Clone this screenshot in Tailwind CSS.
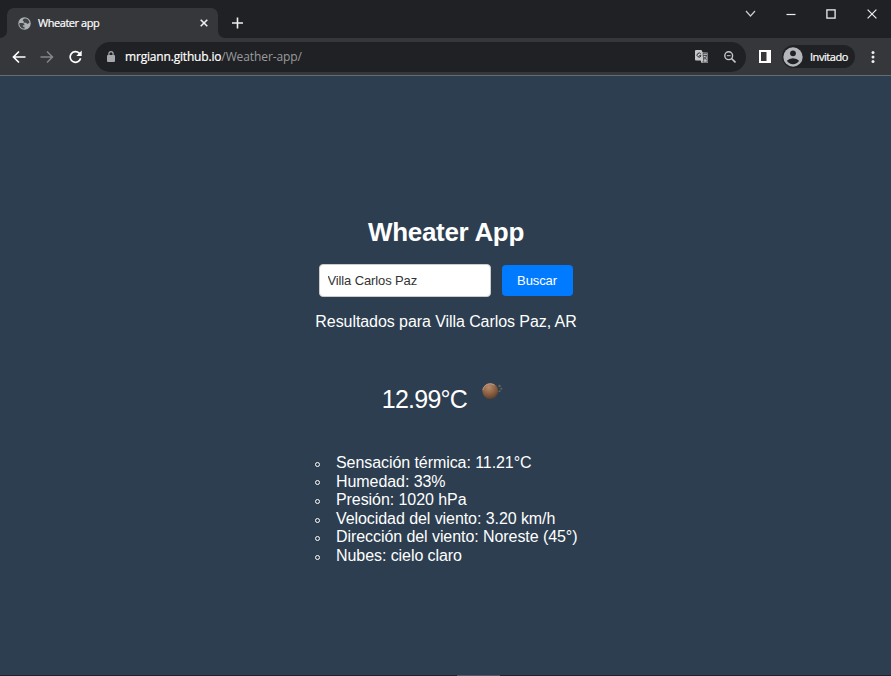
<!DOCTYPE html>
<html lang="es">
<head>
<meta charset="utf-8">
<title>Wheater app</title>
<script src="https://cdn.jsdelivr.net/npm/@tailwindcss/browser@4"></script>
</head>
<body class="w-[891px] h-[676px] overflow-hidden flex flex-col bg-[#2c3e50] text-white font-['Liberation_Sans',Arial,sans-serif]">
<header class="shrink-0 h-[76px] flex flex-col border-b border-[#626c75] bg-[#36373b] font-['Open_Sans','Noto_Sans',sans-serif]">
  <div class="h-[38px] shrink-0 flex bg-[#202124]">
    <div class="w-[225px] shrink-0 pt-2 flex items-end">
      <svg class="w-[7px] h-[7px] shrink-0" viewBox="0 0 7 7"><path d="M7 0v7H0a7 7 0 0 0 7-7z" fill="#36373b"/></svg>
      <div class="w-[211px] h-[30px] shrink-0 rounded-t-[7px] bg-[#36373b] flex items-center pl-[11px] pr-[10px]">
        <svg class="w-[13px] h-[13px] shrink-0" viewBox="0 0 24 24"><circle cx="12" cy="12" r="11.5" fill="#adb0b4"/><path d="M2.500 11h5c3 0 4.500 1.500 4.500 4h-3v3h3v3.500C6 21.500 2 17 2.500 11zM11 3c5-1 9.500 2 10.300 7.500L17 13l-2-2.500h-4.500V7.500H9V5z" fill="#404347"/></svg>
        <span class="ml-[7px] text-[11px] leading-4 font-medium tracking-[-0.45px] [-webkit-text-stroke:0.2px_white] whitespace-nowrap">Wheater app</span>
        <svg class="ml-auto w-2 h-2" viewBox="0 0 8 8"><path d="M.7.7l6.600 6.600M7.300.7L.7 7.300" stroke="#eee" stroke-width="1.600"/></svg>
      </div>
      <svg class="w-[7px] h-[7px] shrink-0" viewBox="0 0 7 7"><path d="M0 0v7h7a7 7 0 0 1-7-7z" fill="#36373b"/></svg>
    </div>
    <div class="pt-[17px] pl-[7px]"><svg class="w-[11px] h-[12px]" viewBox="0 0 11 12"><path d="M5.500.5v11M0 6h11" stroke="#eee" stroke-width="1.600"/></svg></div>
    <div class="ml-auto h-[27px] pr-[14px] flex items-center">
      <svg class="w-[11px] h-[11px] mr-[30px]" viewBox="0 0 11 11"><path d="M1 3l4.500 5L10 3" fill="none" stroke="#ccc" stroke-width="1.200"/></svg>
      <svg class="w-[10px] h-[10px] mr-[30px]" viewBox="0 0 10 10"><path d="M0.500 5.500h9" stroke="#eee" stroke-width="1.200"/></svg>
      <svg class="w-[10px] h-[10px] mr-[31px]" viewBox="0 0 10 10"><rect x=".9" y=".9" width="8.200" height="8.200" fill="none" stroke="#eee" stroke-width="1.300"/></svg>
      <svg class="w-[10px] h-[10px]" viewBox="0 0 10 10"><path d="M.6.6l8.800 8.800M9.400.6L.6 9.400" stroke="#eee" stroke-width="1.200"/></svg>
    </div>
  </div>
  <div class="h-[37px] flex items-center pl-[12px] pr-[16px]">
    <svg class="w-[14px] h-[14px] mr-[14px]" viewBox="0 0 14 14"><path d="M13.500 7H2M7 1.500L1.500 7 7 12.500" fill="none" stroke="#fff" stroke-width="1.700"/></svg>
    <svg class="w-[14px] h-[14px] mr-[14px]" viewBox="0 0 14 14"><path d="M.5 7H12M7 1.500L12.500 7 7 12.500" fill="none" stroke="#85878a" stroke-width="1.500"/></svg>
    <svg class="w-[15px] h-[14px] mr-[12px]" viewBox="0 0 15 14"><path d="M12.600 8.200a5.300 5.300 0 1 1-1.400-5L12.500 4.500" fill="none" stroke="#fff" stroke-width="1.700"/><path d="M13.700.5v5.400H8.300z" fill="#fff"/></svg>
    <div class="w-[651px] h-[30px] rounded-full bg-[#202124] flex items-center pl-[12px] pr-[10px]">
      <svg class="w-[8px] h-[11px]" viewBox="0 0 8 11"><rect y="4" width="8" height="7" rx="1" fill="#a5a8ac"/><path d="M1.900 4V2.700a2.100 2.100 0 0 1 4.200 0V4" fill="none" stroke="#a5a8ac" stroke-width="1.200"/></svg>
      <span class="ml-[10px] text-[12px] leading-4 text-[#999c9f] whitespace-nowrap"><span class="text-white font-medium tracking-[-0.18px] [-webkit-text-stroke:0.2px_white]">mrgiann.github.io</span><span class="tracking-[-0.1px]">/Weather-app/</span></span>
      <svg class="ml-auto w-[13px] h-[13px] mr-[16px]" viewBox="0 0 13 13"><path d="M1 0h5.500l1.200 2.500H12a1 1 0 0 1 1 1V12a1 1 0 0 1-1 1H6.500l-.8-2.500H1a1 1 0 0 1-1-1V1a1 1 0 0 1 1-1z" fill="#c5c7c9"/><path d="M5.800 4A2 2 0 1 0 6 5.700H4.200" fill="none" stroke="#292b2e" stroke-width="1"/><path d="M8 3.300h4.200v8.900H7.700l1-1.700zM8.300 5.500h3.700M10 4.500v1M11.300 5.500c-.3 2-1.300 3.200-2.600 4.200M9 7l2.600 3" fill="none" stroke="#292b2e" stroke-width=".7"/></svg>
      <svg class="w-[12px] h-[12px]" viewBox="0 0 12 12"><circle cx="4.700" cy="4.700" r="3.900" fill="none" stroke="#c5c7c9" stroke-width="1.400"/><path d="M2.800 4.700h3.800" stroke="#c5c7c9" stroke-width="1"/><path d="M7.500 7.500l4 4" stroke="#c5c7c9" stroke-width="1.600"/></svg>
    </div>
    <svg class="ml-[13px] w-[12px] h-[13px]" viewBox="0 0 12 13"><path fill="#fff" fill-rule="evenodd" d="M0 0h12v13H0zM2 2v9h5.500V2z"/></svg>
    <div class="ml-[11px] w-[73px] h-[23px] shrink-0 rounded-full bg-[#202124] flex items-center pl-[1px]">
      <svg class="w-[20px] h-[20px] shrink-0" viewBox="0 0 20 20"><circle cx="10" cy="10" r="9.700" fill="#b3b6ba"/><circle cx="10" cy="6.300" r="2.900" fill="#202124"/><path d="M3.900 13.800Q6 11.300 10 11.300t6.100 2.500Q14 17.200 10 17.200T3.900 13.800z" fill="#202124"/></svg>
      <span class="ml-[7px] text-[11px] leading-4 font-medium tracking-[-0.45px] [-webkit-text-stroke:0.2px_white] whitespace-nowrap">Invitado</span>
    </div>
    <svg class="ml-auto w-[4px] h-[12px]" viewBox="0 0 4 12"><circle cx="2" cy="1.500" r="1.500" fill="#eee"/><circle cx="2" cy="6" r="1.500" fill="#eee"/><circle cx="2" cy="10.500" r="1.500" fill="#eee"/></svg>
  </div>
</header>
<main class="flex-1 min-h-0 flex flex-col items-center">
  <h1 class="mt-[141px] h-[30px] pl-px text-[26px] leading-[30px] tracking-[-0.3px] font-bold">Wheater App</h1>
  <form class="mt-[17px] h-[33px] flex items-center gap-[11px]">
    <input class="w-[172px] h-[33px] rounded-[4px] border border-[#ccc] bg-white px-2 text-[13px] tracking-[-0.12px] text-[#333]" value="Villa Carlos Paz" aria-label="Ciudad">
    <button type="button" class="w-[71px] h-[31px] rounded-[4px] bg-[#007bff] text-[13px] tracking-[-0.1px]">Buscar</button>
  </form>
  <p class="mt-[15px] pl-px text-[16px] leading-5 tracking-[-0.07px] whitespace-nowrap">Resultados para Villa Carlos Paz, AR</p>
  <div class="mt-[49px] h-[40px] flex items-start">
    <span class="mt-[3px] pl-px text-[25px] leading-[30px] tracking-[-0.75px] whitespace-nowrap">12.99°C</span>
    <svg class="ml-[11px] w-[32px] h-[20px]" viewBox="0 0 32 20"><defs><radialGradient id="sun" cx="40%" cy="25%" r="75%"><stop stop-color="#b98b6c"/><stop offset=".65" stop-color="#865a3d"/><stop offset="1" stop-color="#5b4030"/></radialGradient></defs><circle cx="12.300" cy="10.200" r="7.900" fill="url(#sun)"/><path d="M4.800 9.200A7.500 7.500 0 0 1 16.800 4.400" fill="none" stroke="#c0a38e" stroke-width=".9"/><circle cx="21.500" cy="5" r="1.200" fill="#6c6258"/><circle cx="23.300" cy="7.700" r="1" fill="#6c6258"/><circle cx="21.500" cy="10.200" r="1" fill="#6c6258"/></svg>
  </div>
  <ul class="mt-[33px] w-[261px] text-[16px] leading-[18.600px] tracking-[-0.07px]">
    <li class="flex items-center gap-[16px] whitespace-nowrap"><i class="size-[5px] shrink-0 rounded-full border border-white mt-[2px]"></i>Sensación térmica: 11.21°C</li>
    <li class="flex items-center gap-[16px] whitespace-nowrap"><i class="size-[5px] shrink-0 rounded-full border border-white mt-[2px]"></i>Humedad: 33%</li>
    <li class="flex items-center gap-[16px] whitespace-nowrap"><i class="size-[5px] shrink-0 rounded-full border border-white mt-[2px]"></i>Presión: 1020 hPa</li>
    <li class="flex items-center gap-[16px] whitespace-nowrap"><i class="size-[5px] shrink-0 rounded-full border border-white mt-[2px]"></i>Velocidad del viento: 3.20 km/h</li>
    <li class="flex items-center gap-[16px] whitespace-nowrap"><i class="size-[5px] shrink-0 rounded-full border border-white mt-[2px]"></i>Dirección del viento: Noreste (45°)</li>
    <li class="flex items-center gap-[16px] whitespace-nowrap"><i class="size-[5px] shrink-0 rounded-full border border-white mt-[2px]"></i>Nubes: cielo claro</li>
  </ul>
</main>
<footer class="h-px shrink-0 bg-[#1d222d] flex justify-center"><div class="w-[43px] ml-[66px] h-px bg-[#535764]"></div></footer>
</body>
</html>
